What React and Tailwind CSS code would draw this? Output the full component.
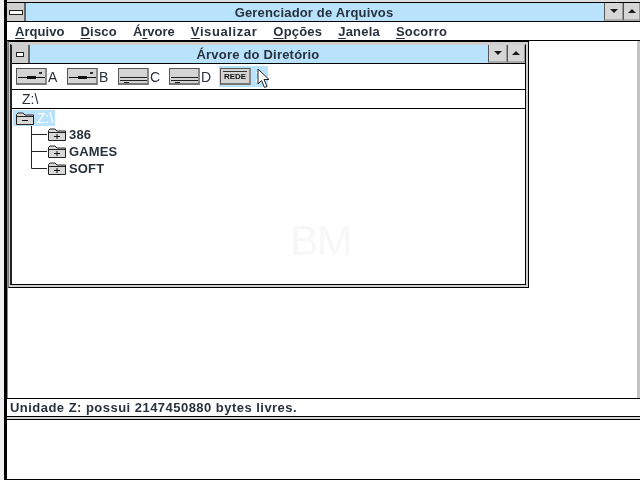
const ink = "text-[#28323c]";

function Arrow({ up }) {
  return (
    <svg width="10" height="6" viewBox="0 0 10 6">
      <path d={up ? "M5 1 L9 5 L1 5 Z" : "M1 1 L9 1 L5 5 Z"} fill="#1a1a1a" />
    </svg>
  );
}

function CtlButton({ up, w }) {
  return (
    <div className={`${w} h-full bg-[#d6d6d6] border-l border-l-[#555] border-r border-r-[#999] border-b-2 border-b-[#aaa] flex items-center justify-center`}>
      <Arrow up={up} />
    </div>
  );
}

function SysBox({ w, dash }) {
  return (
    <div className={`${w} h-full bg-[#cfcfcf] border-r-2 border-r-[#666] flex items-center justify-center`}>
      <div className={`${dash} h-[3px] bg-white border border-[#222] box-content`} />
    </div>
  );
}

function DriveButton({ kind }) {
  return (
    <div className="w-[31px] h-[17px] bg-[#d4d4d4] border border-[#555] border-b-2 border-b-[#777] border-r-2 border-r-[#888] flex items-center justify-center">
      {kind === "floppy" && (
        <svg width="27" height="13" viewBox="0 0 27 13">
          <path d="M0 7.5H27" stroke="#111" strokeWidth="1" />
          <path d="M9 7.5H18" stroke="#111" strokeWidth="3" />
          <rect x="21" y="2" width="3" height="2" fill="#333" />
        </svg>
      )}
      {kind === "disk" && (
        <svg width="27" height="13" viewBox="0 0 27 13">
          <path d="M0 7.5H27M0 10.5H27" stroke="#222" strokeWidth="1" />
          <path d="M4 12.5H9" stroke="#222" strokeWidth="1" />
        </svg>
      )}
    </div>
  );
}

function Drive({ kind, letter }) {
  return (
    <div className="w-[51px] flex items-center gap-[1px]">
      <DriveButton kind={kind} />
      <span className={`text-[14px] leading-none font-normal ${ink}`}>{letter}</span>
    </div>
  );
}

function Folder({ sign }) {
  return (
    <svg width="20" height="13" viewBox="0 0 20 13" className="shrink-0">
      <path d="M1.5 12.5V2.5L3 1H8L10 3H18.5V12.5Z" fill="#d8d8d8" stroke="#222" strokeWidth="1" />
      <path d="M1.5 4.5H18" stroke="#222" strokeWidth="1" />
      <path d="M7 8.5H13" stroke="#111" strokeWidth="1" />
      {sign === "+" && <path d="M10 6V11" stroke="#111" strokeWidth="1" />}
    </svg>
  );
}

function TreeRow({ label }) {
  return (
    <div className="h-[17px] flex items-center pl-[17px]">
      <svg width="17" height="17" viewBox="0 0 17 17" className="shrink-0">
        <path d={label === "SOFT" ? "M1.5 0V8.5H17" : "M1.5 0V17M1.5 8.5H17"} stroke="#222" strokeWidth="1" fill="none" />
      </svg>
      <Folder sign="+" />
      <span className={`ml-[2px] text-[13px] leading-none ${ink} tracking-[0.15px]`}>{label}</span>
    </div>
  );
}

function MenuItem({ before = "", mark, after, track = "tracking-[0.2px]" }) {
  return (
    <span className={`text-[13px] leading-none ${ink} ${track}`}>
      {before}
      <span className="underline underline-offset-2">{mark}</span>
      {after}
    </span>
  );
}

export default function App() {
  return (
    <div className="relative w-[640px] h-[480px] bg-white overflow-hidden flex font-bold blur-[0.35px] [font-family:'Liberation_Sans',Arial,sans-serif]">
      <div className="w-[4px] bg-[#f0f0f0]" />
      <div className="flex-1 flex flex-col border-l-[3px] border-black">
        {/* Main window */}
        <div className="h-[420px] flex flex-col border-b border-black">
          <div className="h-[3px] bg-[#dcdcdc] border-b border-black shrink-0" />
          <div className="h-[19px] shrink-0 flex border-b border-black">
            <SysBox w="w-[19px]" dash="w-[12px]" />
            <div className={`flex-1 bg-[#b9e3fd] flex items-center justify-center text-[13px] leading-none ${ink} tracking-[0.17px] pr-[2px]`}>
              Gerenciador de Arquivos
            </div>
            <CtlButton w="w-[19px]" />
            <CtlButton up w="w-[17px]" />
          </div>
          <div className="h-[19px] shrink-0 flex items-center gap-[16px] pl-[8px] border-b border-black">
            <MenuItem mark="A" after="rquivo" track="tracking-[0.05px]" />
            <MenuItem mark="D" after="isco" />
            <MenuItem before="Á" mark="r" after="vore" track="tracking-[0px]" />
            <MenuItem mark="V" after="isualizar" track="tracking-[0.6px]" />
            <MenuItem mark="O" after="pções" />
            <MenuItem mark="J" after="anela" />
            <MenuItem mark="S" after="ocorro" />
          </div>

          {/* MDI client */}
          <div className="flex-1 min-h-0 border-l border-l-[#888] border-r-[3px] border-r-[#c4c4c4]">
            <div className="w-[521px] h-[247px] border border-black border-l-[#777] bg-[#d0d0d0] pt-[2px] pb-[2px] pl-[1px] pr-[2px]">
              <div className="h-full flex flex-col bg-white border-l-2 border-l-[#222] border-r border-r-black border-b border-b-black border-t border-t-[#d0d0d0]">
                <div className="h-[19px] shrink-0 flex border-b border-black">
                  <SysBox w="w-[18px]" dash="w-[6px]" />
                  <div className={`flex-1 bg-[#b9e3fd] flex items-center justify-center text-[13px] leading-none ${ink} tracking-[0.2px] pr-[2px]`}>
                    Árvore do Diretório
                  </div>
                  <CtlButton w="w-[19px]" />
                  <CtlButton up w="w-[18px]" />
                </div>
                <div className="h-[26px] shrink-0 flex items-center pl-[4px] border-b border-black">
                  <Drive kind="floppy" letter="A" />
                  <Drive kind="floppy" letter="B" />
                  <Drive kind="disk" letter="C" />
                  <Drive kind="disk" letter="D" />
                  <div className="relative h-[21px] w-[49px] -ml-[1px] bg-[#b9e3fd] flex items-center pl-[1px] gap-[4px]">
                    <div className="w-[31px] h-[17px] bg-[#d4d4d4] border border-[#555] border-b-2 border-b-[#777] border-r-2 border-r-[#888] flex flex-col items-center justify-center">
                      <div className="w-[24px] h-[1px] bg-[#333] mb-[1px]" />
                      <span className="text-[8px] leading-[8px] font-bold text-[#111]">REDE</span>
                    </div>
                    <span className="text-[14px] leading-none font-normal text-white">Z</span>
                    <svg width="14" height="21" viewBox="0 0 14 21" className="absolute left-[38px] top-[2px]">
                      <path d="M1 1V16L4.5 12.5L7.5 19.5L10 18.5L7 11.5H12Z" fill="#fff" stroke="#222" strokeWidth="1" strokeLinejoin="miter" />
                    </svg>
                  </div>
                </div>
                <div className={`h-[19px] shrink-0 flex items-center pl-[10px] border-b border-black text-[14px] leading-none font-normal ${ink}`}>
                  Z:\
                </div>
                <div className="relative flex-1 min-h-0 pt-[1px] pl-[1px]">
                  <div className="h-[16px] w-[42px] bg-[#b9e3fd] flex items-center pl-[2px] gap-[2px]">
                    <Folder sign="-" />
                    <span className="text-[14px] leading-none font-normal text-white">Z:\</span>
                  </div>
                  <TreeRow label="386" />
                  <TreeRow label="GAMES" />
                  <TreeRow label="SOFT" />
                  <div className="absolute left-[278px] top-[110px] text-[43px] leading-none font-normal tracking-[-2px] text-[#f7f7f7]">
                    BM
                  </div>
                </div>
              </div>
            </div>
          </div>

          {/* Status bar */}
          <div className={`h-[19px] shrink-0 flex items-center pl-[3px] border-t border-b border-black text-[13px] leading-none ${ink} tracking-[0.47px]`}>
            Unidade Z: possui 2147450880 bytes livres.
          </div>
          <div className="h-[2px] shrink-0 bg-[#d4d4d4]" />
        </div>
        {/* Desktop below */}
        <div className="flex-1 bg-white border-b border-black" />
      </div>
    </div>
  );
}
